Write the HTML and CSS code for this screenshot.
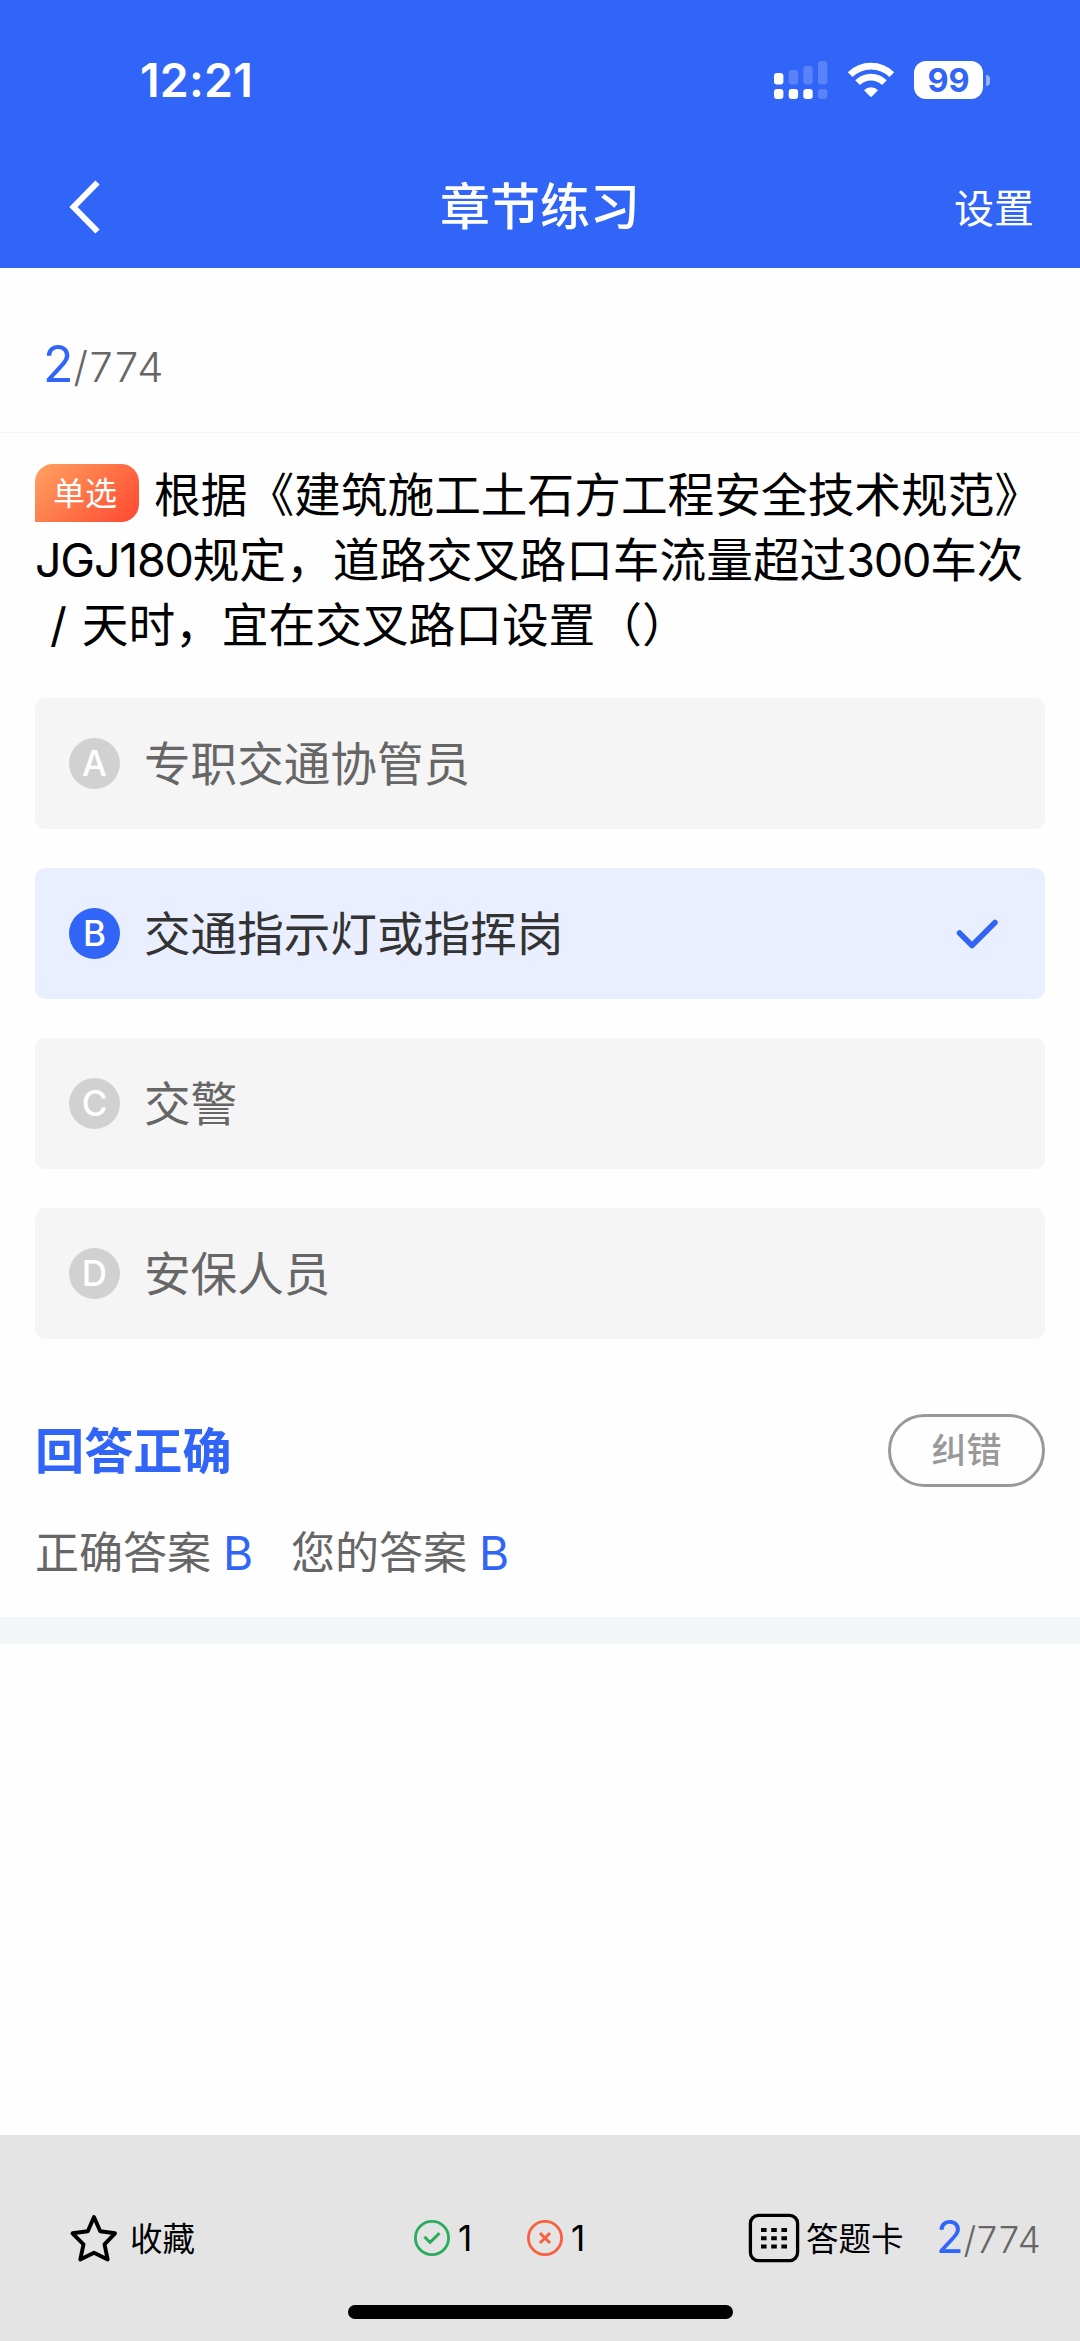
FILE: index.html
```html
<!DOCTYPE html>
<html lang="zh-CN">
<head>
<meta charset="utf-8">
<title>章节练习</title>
<link rel="stylesheet" href="styles.css">
</head>
<body>
<div class="app">
  <header class="header">
    <div class="status">
      <span class="time">12:21</span>
      <div class="status-icons">
        <svg class="signal" width="54" height="38" viewBox="0 0 54 38" fill="#fff">
          <rect x="0" y="12" width="9.4" height="11.5" rx="3"/>
          <rect x="14.7" y="9" width="9.4" height="14.5" rx="3" opacity=".2"/>
          <rect x="29.3" y="5" width="9.4" height="18.5" rx="3" opacity=".2"/>
          <rect x="44" y="0" width="9.4" height="23.5" rx="3" opacity=".2"/>
          <rect x="0" y="28" width="9.4" height="10" rx="3"/>
          <rect x="14.7" y="28" width="9.4" height="10" rx="3"/>
          <rect x="29.3" y="28" width="9.4" height="10" rx="3"/>
          <rect x="44" y="28" width="9.4" height="10" rx="3" opacity=".2"/>
        </svg>
        <svg class="wifi" width="48" height="36" viewBox="0 0 48 36">
          <g fill="none" stroke="#fff" stroke-width="6.8">
            <path d="M3.2 12.7A29.6 29.6 0 0 1 44.8 12.7"/>
            <path d="M10.6 20.7A19 19 0 0 1 37.4 20.7"/>
          </g>
          <path d="M17 28.2A10 10 0 0 1 31 28.2L24.8 34.6Q24 35.3 23.2 34.6Z" fill="#fff"/>
        </svg>
        <div class="battery"><span class="level">99</span><i class="nub"></i></div>
      </div>
    </div>
    <nav class="nav">
      <svg class="back" width="34" height="56" viewBox="0 0 34 56"><path d="M29.5 3.5L5.5 28L29.5 52.5" fill="none" stroke="#fff" stroke-width="6"/></svg>
      <h1 class="title">章节练习</h1>
      <a class="settings">设置</a>
    </nav>
  </header>

  <div class="progress"><span class="current">2</span><span class="total">/774</span></div>

  <main class="main">
    <p class="question"><span class="badge">单选</span>根据《建筑施工土石方工程安全技术规范》<br><span class="latin">JGJ180</span>规定，道路交叉路口车流量超过<span class="latin">300</span>车次<br><span class="slash">/</span>天时，宜在交叉路口设置（）</p>

    <ul class="options">
      <li class="option"><span class="key">A</span><span class="label">专职交通协管员</span></li>
      <li class="option selected"><span class="key">B</span><span class="label">交通指示灯或指挥岗</span>
        <svg class="tick" width="44" height="34" viewBox="0 0 44 34"><path d="M4.5 17L17 29.5L40 6.5" fill="none" stroke="#3165f8" stroke-width="5.5" stroke-linecap="round" stroke-linejoin="round"/></svg></li>
      <li class="option"><span class="key">C</span><span class="label">交警</span></li>
      <li class="option"><span class="key">D</span><span class="label">安保人员</span></li>
    </ul>

    <div class="result">
      <h2 class="verdict">回答正确</h2>
      <button class="report">纠错</button>
    </div>
    <div class="answers">
      <span>正确答案</span><b>B</b><span class="mine">您的答案</span><b>B</b>
    </div>
  </main>
  <div class="band"></div>

  <footer class="footer">
    <div class="bar">
      <div class="item favorite">
        <svg width="50" height="50" viewBox="0 0 50 50"><path d="M26 4L32.2 18.3L47 20.3L36.5 31.3L39.7 46.5L26 39.7L12.3 46.5L15.5 31.3L4.5 20.3L19.8 18.3Z" fill="none" stroke="#000" stroke-width="3.9" stroke-linejoin="round"/></svg>
        <span class="text">收藏</span>
      </div>
      <div class="item right">
        <svg width="36" height="36" viewBox="0 0 36 36" fill="none" stroke="#2bab5d"><circle cx="18" cy="18" r="16.6" stroke-width="2.8"/><path d="M10.5 16.8L16 22.3L25.5 13.2" stroke-width="3"/></svg>
        <span class="count">1</span>
      </div>
      <div class="item wrong">
        <svg width="36" height="36" viewBox="0 0 36 36" fill="none" stroke="#f9603f"><circle cx="18" cy="18" r="16.6" stroke-width="2.8"/><path d="M13 13L23 23M23 13L13 23" stroke-width="3"/></svg>
        <span class="count">1</span>
      </div>
      <div class="item card">
        <svg width="52" height="50" viewBox="0 0 52 50"><rect x="2.4" y="2.4" width="47.2" height="45.2" rx="8" fill="none" stroke="#000" stroke-width="3.3"/><path d="M13 17h26M13 25.2h26M13 33.6h26" stroke="#000" stroke-width="4" stroke-dasharray="5.6 4.6"/></svg>
        <span class="text">答题卡</span>
      </div>
      <div class="mini"><span class="current">2</span><span class="total">/774</span></div>
    </div>
    <div class="home"></div>
  </footer>
</div>
</body>
</html>
```

FILE: styles.css
```css
* { box-sizing: border-box; margin: 0; padding: 0; }
body {
  font-family: Inter, "Noto Sans CJK SC", sans-serif;
  background: #fefefe;
  color: #000;
}
svg { display: block; flex: none; }
.app { width: 1080px; height: 2341px; display: flex; flex-direction: column; overflow: hidden; }

.header { height: 268px; background: #3165f8; color: #fff; flex: none; }
.status { height: 160px; padding: 0 90px 0 140px; display: flex; justify-content: space-between; align-items: center; }
.time { font-size: 46.5px; font-weight: 600; letter-spacing: .2px; line-height: 62px; }
.status-icons { display: flex; align-items: center; }
.wifi { margin: 0 19px; }
.battery { display: flex; align-items: center; gap: 3px; }
.level { width: 69px; height: 38px; border-radius: 12px; background: #fff; color: #3165f8; font-size: 32.5px; font-weight: 700; line-height: 40px; text-align: center; }
.nub { width: 4px; height: 11px; border-radius: 0 5px 5px 0; background: rgba(255, 255, 255, .5); }
.nav { height: 94px; padding: 0 46px 0 68px; display: grid; grid-template-columns: 100px 1fr 122px; align-items: center; }
.title { font-size: 50px; font-weight: 500; line-height: 74px; text-align: center; }
.settings { padding-top: 3px; font-size: 40px; line-height: 60px; text-align: right; }

.progress { height: 165px; padding: 56px 0 0 43px; border-bottom: 1px solid #f3f3f3; flex: none; line-height: 80px; font-weight: 300; }
.progress .current { font-size: 50px; color: #3165f8; font-weight: 400; }
.progress .total { font-size: 41.5px; letter-spacing: 1.5px; color: #666; }

.main { padding: 30px 35px 0; height: 1184px; flex: none; }
.question { height: 193px; font-size: 46.7px; line-height: 65px; white-space: nowrap; }
.badge { display: inline-block; width: 104px; height: 58px; margin-right: 15px; padding-right: 4px; border-radius: 18px 18px 18px 0; background: linear-gradient(135deg, #ffa260, #ff4730); color: #fff; font-size: 32px; line-height: 60px; text-align: center; vertical-align: 7px; }
.latin { letter-spacing: -1.3px; }
.slash { display: inline-block; width: 46.7px; text-align: center; }

.options { list-style: none; margin-top: 42px; display: flex; flex-direction: column; gap: 39.5px; }
.option { height: 130.5px; padding: 0 46px 0 34px; display: flex; align-items: center; border-radius: 10px; background: #f5f5f5; color: #666; }
.key { width: 51px; height: 51px; border-radius: 50%; background: #d2d1d2; color: #fff; font-size: 35px; font-weight: 550; line-height: 51px; text-align: center; }
.label { margin-left: 24px; padding-top: 2px; font-size: 46.6px; line-height: 70px; }
.selected { background: #eaefff; color: #333; }
.selected .key { background: #3165f8; }
.tick { margin-left: auto; }

.result { margin-top: 75px; display: flex; justify-content: space-between; align-items: center; }
.verdict { padding-top: 2px; font-size: 49.2px; font-weight: 700; line-height: 71px; color: #3165f8; }
.report { width: 157px; height: 73px; border: 3px solid #999; border-radius: 37px; background: none; color: #999; font: 500 35px/65px Inter, "Noto Sans CJK SC", sans-serif; }
.answers { margin-top: 33px; height: 66px; display: flex; align-items: center; font-size: 44px; line-height: 66px; color: #666; }
.answers b { margin-left: 12px; color: #3165f8; font-size: 46px; font-weight: 400; }
.mine { margin-left: 38px; }
.band { height: 27px; background: #f3f6f7; flex: none; }

.footer { margin-top: auto; height: 206px; padding-top: 60px; background: #e4e4e4; flex: none; }
.bar { height: 86px; padding-left: 68px; display: flex; align-items: center; font-size: 32.5px; white-space: nowrap; }
.item { display: flex; align-items: center; }
.text { padding-bottom: 3px; }
.favorite { width: 346px; gap: 12px; }
.right { width: 113px; gap: 8px; }
.wrong { width: 221px; gap: 8px; }
.card { width: 188px; gap: 6px; }
.count { font-size: 35px; }
.mini { font-weight: 300; line-height: 50px; padding-top: 3px; }
.mini .current { font-size: 45px; color: #3165f8; font-weight: 400; }
.mini .total { font-size: 36.5px; letter-spacing: .7px; color: #666; }
.home { width: 385px; height: 14px; margin: 24px 0 0 348px; border-radius: 7px; background: #000; }
```
